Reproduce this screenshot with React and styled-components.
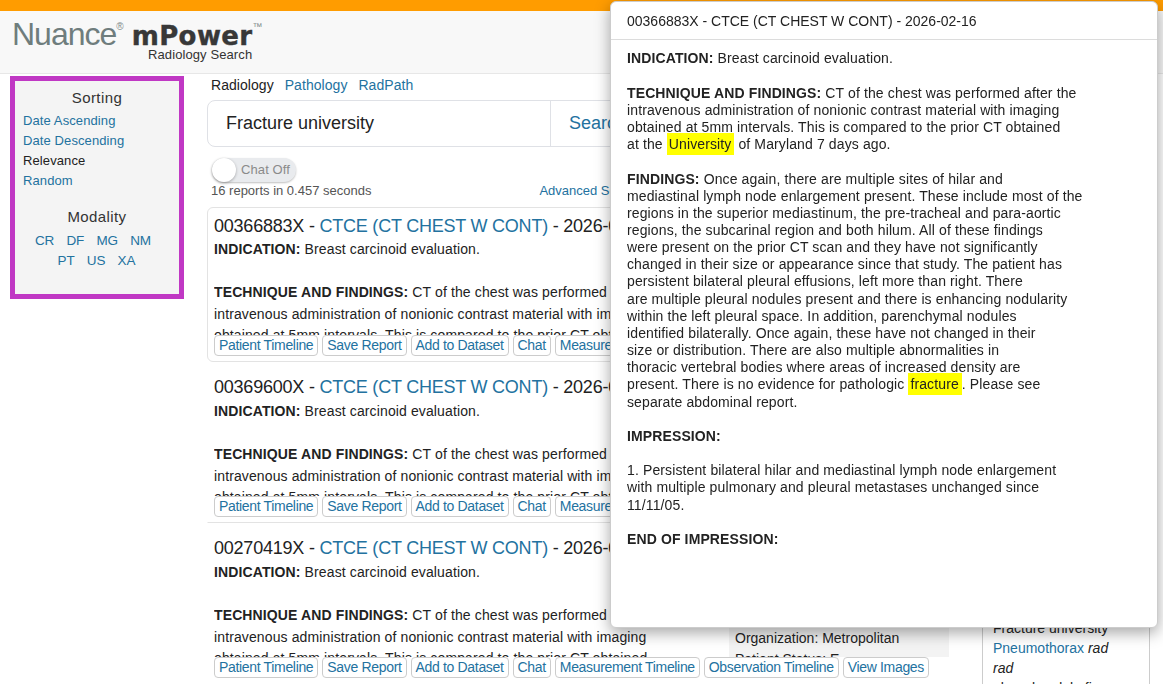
import React from "react"
import styled, { createGlobalStyle } from "styled-components"

const GlobalStyle = createGlobalStyle`
  html, body {
    margin: 0;
    height: 100%;
    overflow: hidden;
    background: #fff;
  }
  body {
    font-family: "Liberation Sans", Arial, sans-serif;
    font-size: 14px;
    color: #222;
  }
  a { color: #23729f; text-decoration: none; }
`

const TopBar = styled.div`
  height: 11px;
  background: #ff9c00;
`
const Header = styled.header`
  height: 63px;
  box-sizing: border-box;
  background: #f8f8f8;
  border-bottom: 1px solid #e7e7e7;
  padding: 6px 0 0 12px;
`
const Logo = styled.div`
  width: 270px;
  height: 56px;
  display: flex;
  flex-direction: column;
`
const LogoLine = styled.div`
  display: flex;
  align-items: baseline;
  height: 30px;
  line-height: 35px;
  white-space: nowrap;
`
const LogoNuance = styled.span`
  font-size: 32px;
  letter-spacing: -1px;
  color: #6f7d7d;
`
const LogoPower = styled.span`
  font-family: "DejaVu Sans", sans-serif;
  font-size: 26px;
  font-weight: 700;
  color: #383838;
  margin-left: 8px;
  letter-spacing: 0.4px;
  -webkit-text-stroke: 0.4px #383838;
`
const LogoMark = styled.span`
  font-size: 10px;
  line-height: 10px;
  color: #7f8b8b;
  transform: translateY(-15px);
`
const LogoSub = styled.div`
  font-size: 13px;
  color: #333;
  margin: 0 0 0 136px;
  line-height: 16px;
  letter-spacing: 0.1px;
`

const Body = styled.div`
  display: flex;
  align-items: flex-start;
`
const SideBox = styled.aside`
  width: 174px;
  height: 223px;
  box-sizing: border-box;
  margin: 2px 0 0 10px;
  flex: none;
  background: #f4f4f4;
  border: 5px solid #c038c4;
  padding: 7px 8px 0;
`
const SideTitle = styled.div`
  font-size: 15px;
  text-align: center;
  line-height: 20px;
  color: #333;
  letter-spacing: 0.4px;
  margin-bottom: ${p => p.$gap}px;
`
const SortItem = styled.div`
  line-height: 20px;
  font-size: 13px;
  letter-spacing: 0.1px;
  color: #222;
`
const ModalityList = styled.div`
  display: flex;
  flex-wrap: wrap;
  justify-content: center;
  column-gap: 12px;
  font-size: 13.5px;
  line-height: 20px;
  padding: 0 10px;
  margin-left: -1px;

  a:nth-child(4) {
    margin-right: 7px;
  }
`
const SideSpacer = styled.div`
  height: 16px;
`

const Main = styled.main`
  width: 758px;
  margin-left: 23px;
  flex: none;
`
const Tabs = styled.nav`
  display: flex;
  gap: 11px;
  line-height: 20px;
  margin: 1px 0 0 4px;
  letter-spacing: 0.05px;
`
const SearchBar = styled.div`
  display: flex;
  height: 47px;
  box-sizing: border-box;
  margin-top: 5px;
  border: 1px solid #dfe1e6;
  border-radius: 8px;
  align-items: stretch;
`
const SearchInput = styled.div`
  width: 343px;
  box-sizing: border-box;
  padding-left: 18px;
  font-size: 18px;
  line-height: 44px;
  color: #222;
  border-right: 1px solid #dfe1e6;
`
const SearchButton = styled.a`
  padding-left: 18px;
  font-size: 18px;
  line-height: 44px;
`
const ToggleRow = styled.div`
  margin: 11px 0 0 5px;
  height: 24px;
`
const Toggle = styled.div`
  position: relative;
  width: 84px;
  height: 24px;
  box-sizing: border-box;
  border-radius: 12px;
  background: #e9ebee;
  box-shadow: 0 1px 2px rgba(0, 0, 0, 0.25);
  padding-left: 29px;
  font-size: 13px;
  line-height: 24px;
  letter-spacing: 0.1px;
  color: #8a8a8a;
`
const ToggleKnob = styled.span`
  position: absolute;
  left: 0;
  top: 0;
  width: 24px;
  height: 24px;
  border-radius: 50%;
  background: #fff;
  box-shadow: 0 1px 3px rgba(0, 0, 0, 0.3);
`
const StatsRow = styled.div`
  display: flex;
  gap: 168px;
  margin: 0 0 0 4px;
  height: 25px;
  font-size: 13px;
  line-height: 18px;
  color: #555;
  white-space: nowrap;
`
const Card = styled.article`
  box-sizing: border-box;
  height: 155px;
  padding: 6px 6px 0;
  margin-bottom: 6px;
  border: 1px solid ${p => (p.$boxed ? "#e3e3e3" : "transparent")};
  border-bottom-color: ${p => (p.$last ? "transparent" : "#e3e3e3")};
  border-radius: ${p => (p.$boxed ? "6px" : "0")};
`
const CardTitle = styled.div`
  font-size: 18px;
  line-height: 24px;
  letter-spacing: -0.22px;
  color: #222;
  white-space: nowrap;
`
const CardBody = styled.div`
  display: flex;
  height: ${p => (p.$boxed ? 96 : 95)}px;
  overflow: hidden;
  margin-top: ${p => (p.$boxed ? 1 : 2)}px;
`
const ReportText = styled.div`
  width: 515px;
  flex: none;
  line-height: 21.5px;
  letter-spacing: 0.12px;
  white-space: pre-line;
  color: #222;
`
const Info = styled.div`
  width: 220px;
  box-sizing: border-box;
  padding: 66px 0 0 6px;
  background: #f3f3f3;
  line-height: 21px;
`
const ActionRow = styled.div`
  display: flex;
  gap: 4px;
  white-space: nowrap;
`
const Action = styled.a`
  display: block;
  height: 21px;
  box-sizing: border-box;
  padding: 0 4px;
  border: 1px solid #ccc;
  border-radius: 4px;
  font-size: 14px;
  letter-spacing: -0.33px;
  line-height: 18px;
  background: #fff;
`

const Related = styled.aside`
  width: 168px;
  height: 66px;
  overflow: hidden;
  box-sizing: border-box;
  flex: none;
  margin: 544px 0 0 17px;
  padding: 0 10px;
  border: 1px solid #ccc;
  border-width: 0 1px;
  line-height: 20px;
  color: #222;
`

const Modal = styled.section`
  position: fixed;
  left: 610px;
  top: 1px;
  width: 548px;
  height: 627px;
  box-sizing: border-box;
  background: #fff;
  border: 1px solid #ccc;
  border-radius: 6px;
  box-shadow: 0 5px 15px rgba(0, 0, 0, 0.35);
`
const ModalHeader = styled.div`
  height: 38px;
  box-sizing: border-box;
  padding-left: 16px;
  border-bottom: 1px solid #dcdcdc;
  font-size: 14px;
  line-height: 38px;
  color: #222;
`
const ModalBody = styled.div`
  padding: 10.45px 16px 0;
  line-height: 17.15px;
  letter-spacing: 0.12px;
  white-space: pre-line;
  color: #222;
`
const Mark = styled.mark`
  background: #ffff00;
  color: #222;
  padding: 3px 3px 3px 2px;
`

const sorts = ["Date Ascending", "Date Descending", "Relevance", "Random"]
const modalities = ["CR", "DF", "MG", "NM", "PT", "US", "XA"]
const actions = ["Patient Timeline", "Save Report", "Add to Dataset", "Chat", "Measurement Timeline", "Observation Timeline", "View Images"]
const reports = [
  { id: "00366883X", boxed: true },
  { id: "00369600X" },
  { id: "00270419X", last: true },
]

const Report = ({ report }) => (
  <Card $boxed={report.boxed} $last={report.last}>
    <CardTitle>
      {report.id} - <a href="#">CTCE (CT CHEST W CONT)</a> - 2026-02-16
    </CardTitle>
    <CardBody $boxed={report.boxed}>
      <ReportText>
        <b>INDICATION:</b> Breast carcinoid evaluation.{"\n\n"}
        <b>TECHNIQUE AND FINDINGS:</b> CT of the chest was performed after the{"\n"}
        intravenous administration of nonionic contrast material with imaging{"\n"}
        obtained at 5mm intervals. This is compared to the prior CT obtained
      </ReportText>
      <Info>
        <div>Organization: Metropolitan</div>
        <div>Patient Status: E</div>
      </Info>
    </CardBody>
    <ActionRow>
      {actions.map(a => (
        <Action href="#" key={a}>{a}</Action>
      ))}
    </ActionRow>
  </Card>
)

export default function App() {
  return (
    <>
      <GlobalStyle />
      <TopBar />
      <Header>
        <Logo>
          <LogoLine>
            <LogoNuance>Nuance</LogoNuance>
            <LogoMark>®</LogoMark>
            <LogoPower>mPower</LogoPower>
            <LogoMark>™</LogoMark>
          </LogoLine>
          <LogoSub>Radiology Search</LogoSub>
        </Logo>
      </Header>
      <Body>
        <SideBox>
          <SideTitle $gap={3}>Sorting</SideTitle>
          {sorts.map(s => (
            <SortItem key={s}>
              {s === "Relevance" ? s : <a href="#">{s}</a>}
            </SortItem>
          ))}
          <SideSpacer />
          <SideTitle $gap={4}>Modality</SideTitle>
          <ModalityList>
            {modalities.map(m => (
              <a href="#" key={m}>{m}</a>
            ))}
          </ModalityList>
        </SideBox>
        <Main>
          <Tabs>
            <span>Radiology</span>
            <a href="#">Pathology</a>
            <a href="#">RadPath</a>
          </Tabs>
          <SearchBar>
            <SearchInput>Fracture university</SearchInput>
            <SearchButton href="#">Search</SearchButton>
          </SearchBar>
          <ToggleRow>
            <Toggle>
              <ToggleKnob />
              Chat Off
            </Toggle>
          </ToggleRow>
          <StatsRow>
            <span>16 reports in 0.457 seconds</span>
            <a href="#">Advanced Search</a>
          </StatsRow>
          {reports.map(r => (
            <Report report={r} key={r.id} />
          ))}
        </Main>
        <Related>
          <div>Fracture university</div>
          <div><a href="#">Pneumothorax</a> <i>rad</i></div>
          <div><i>rad</i></div>
          <div>pleural nodule fine</div>
        </Related>
      </Body>
      <Modal>
        <ModalHeader>00366883X - CTCE (CT CHEST W CONT) - 2026-02-16</ModalHeader>
        <ModalBody>
          <b>INDICATION:</b> Breast carcinoid evaluation.{"\n\n"}
          <b>TECHNIQUE AND FINDINGS:</b> CT of the chest was performed after the{"\n"}
          intravenous administration of nonionic contrast material with imaging{"\n"}
          obtained at 5mm intervals. This is compared to the prior CT obtained{"\n"}
          at the <Mark>University</Mark> of Maryland 7 days ago.{"\n\n"}
          <b>FINDINGS:</b> Once again, there are multiple sites of hilar and{"\n"}
          mediastinal lymph node enlargement present. These include most of the{"\n"}
          regions in the superior mediastinum, the pre-tracheal and para-aortic{"\n"}
          regions, the subcarinal region and both hilum. All of these findings{"\n"}
          were present on the prior CT scan and they have not significantly{"\n"}
          changed in their size or appearance since that study. The patient has{"\n"}
          persistent bilateral pleural effusions, left more than right. There{"\n"}
          are multiple pleural nodules present and there is enhancing nodularity{"\n"}
          within the left pleural space. In addition, parenchymal nodules{"\n"}
          identified bilaterally. Once again, these have not changed in their{"\n"}
          size or distribution. There are also multiple abnormalities in{"\n"}
          thoracic vertebral bodies where areas of increased density are{"\n"}
          present. There is no evidence for pathologic <Mark>fracture</Mark>. Please see{"\n"}
          separate abdominal report.{"\n\n"}
          <b>IMPRESSION:</b>{"\n\n"}
          1. Persistent bilateral hilar and mediastinal lymph node enlargement{"\n"}
          with multiple pulmonary and pleural metastases unchanged since{"\n"}
          11/11/05.{"\n\n"}
          <b>END OF IMPRESSION:</b>
        </ModalBody>
      </Modal>
    </>
  )
}
